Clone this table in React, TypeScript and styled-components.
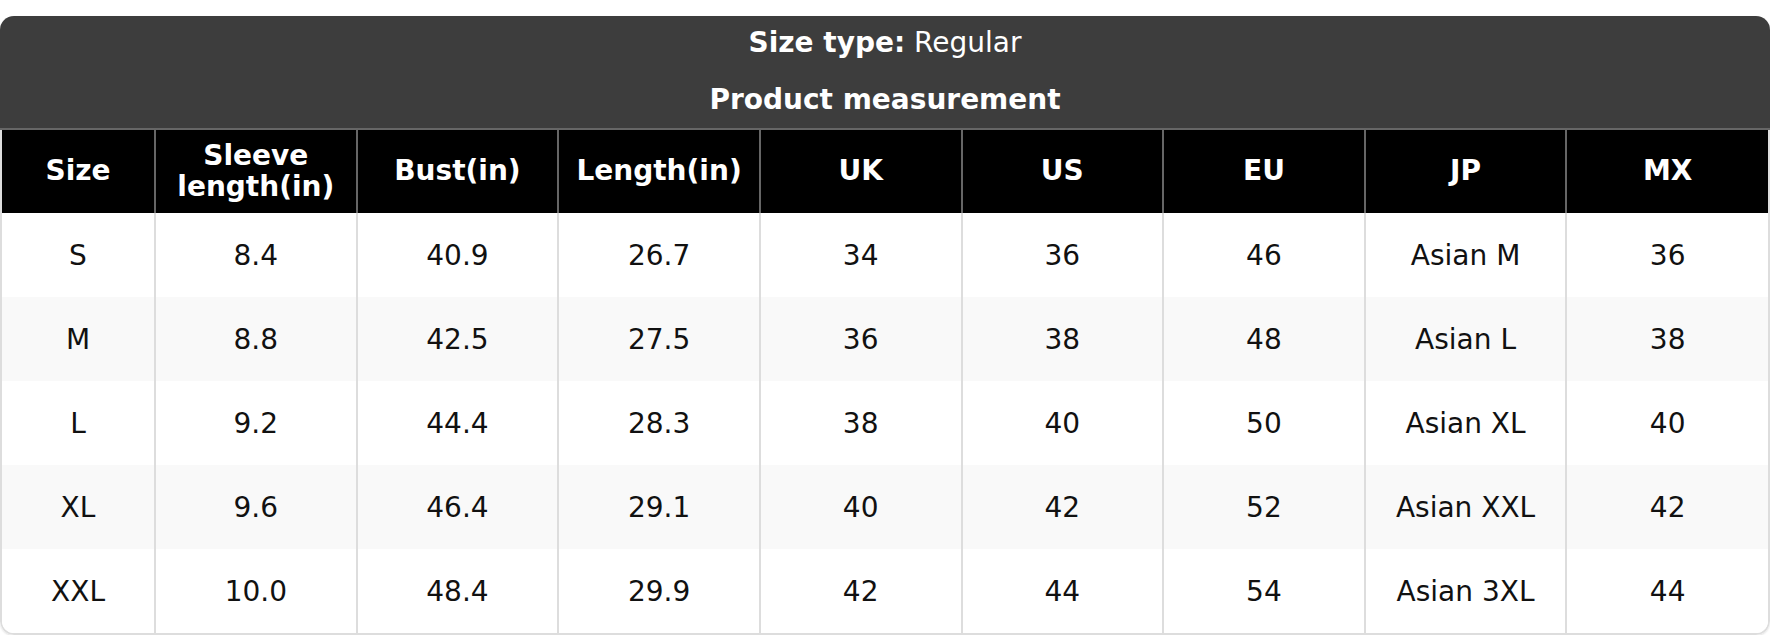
import React from "react";
import styled, { createGlobalStyle } from "styled-components";

const GlobalStyle = createGlobalStyle`
  html, body { margin: 0; padding: 0; background: #ffffff; }
  body { font-family: "DejaVu Sans", "Liberation Sans", sans-serif; }
`;

const Page = styled.div`
  padding-top: 16px;
  width: 1770px;
`;

const Card = styled.div`
  border-radius: 14px;
  overflow: hidden;
  background: #ffffff;
  box-shadow: 0 1px 2px rgba(0, 0, 0, 0.12);
`;

const Caption = styled.div`
  background: #3d3d3d;
  color: #ffffff;
  padding: 10px 0 11px;
  text-align: center;
  font-size: 28px;
  border-bottom: 2px solid #666666;
`;

const CaptionLine = styled.div<{ $gap?: number }>`
  height: 34px;
  line-height: 34px;
  margin-top: ${(p) => p.$gap ?? 0}px;
  font-weight: ${(p) => (p.$gap ? 700 : 400)};
`;

const Strong = styled.span`
  font-weight: 700;
`;

const TableWrap = styled.div`
  border: 2px solid #dddddd;
  border-top: none;
  border-radius: 0 0 14px 14px;
  overflow: hidden;
`;

const Table = styled.table`
  width: 100%;
  border-collapse: collapse;
  table-layout: fixed;
  font-size: 28px;
`;

const HeadRow = styled.tr`
  height: 83px;
  background: #000000;
`;

const HeadCell = styled.th`
  color: #ffffff;
  font-weight: 700;
  line-height: 1.1;
  padding: 0 8px;
  text-align: center;
  border-left: 2px solid #666666;
  &:first-child { border-left: none; }
`;

const BodyRow = styled.tr<{ $striped: boolean }>`
  height: 84px;
  background: ${(p) => (p.$striped ? "#f9f9f9" : "#ffffff")};
`;

const BodyCell = styled.td`
  color: #111111;
  text-align: center;
  padding: 0 8px;
  border-left: 2px solid #dddddd;
  border-right: 2px solid #dddddd;
  &:first-child { border-left: none; }
  &:last-child { border-right: none; }
`;

const headers = [
  "Size",
  "Sleeve length(in)",
  "Bust(in)",
  "Length(in)",
  "UK",
  "US",
  "EU",
  "JP",
  "MX",
];

const rows = [
  ["S", "8.4", "40.9", "26.7", "34", "36", "46", "Asian M", "36"],
  ["M", "8.8", "42.5", "27.5", "36", "38", "48", "Asian L", "38"],
  ["L", "9.2", "44.4", "28.3", "38", "40", "50", "Asian XL", "40"],
  ["XL", "9.6", "46.4", "29.1", "40", "42", "52", "Asian XXL", "42"],
  ["XXL", "10.0", "48.4", "29.9", "42", "44", "54", "Asian 3XL", "44"],
];

export default function App() {
  return (
    <Page>
      <GlobalStyle />
      <Card>
        <Caption>
          <CaptionLine>
            <Strong>Size type:</Strong> Regular
          </CaptionLine>
          <CaptionLine $gap={23}>Product measurement</CaptionLine>
        </Caption>
        <TableWrap>
          <Table>
            <colgroup>
              <col style={{ width: 153 }} />
              {headers.slice(1).map((h) => (
                <col key={h} />
              ))}
            </colgroup>
            <thead>
              <HeadRow>
                {headers.map((h) => (
                  <HeadCell key={h}>{h}</HeadCell>
                ))}
              </HeadRow>
            </thead>
            <tbody>
              {rows.map((r, i) => (
                <BodyRow key={r[0]} $striped={i % 2 === 1}>
                  {r.map((c, j) => (
                    <BodyCell key={j}>{c}</BodyCell>
                  ))}
                </BodyRow>
              ))}
            </tbody>
          </Table>
        </TableWrap>
      </Card>
    </Page>
  );
}
